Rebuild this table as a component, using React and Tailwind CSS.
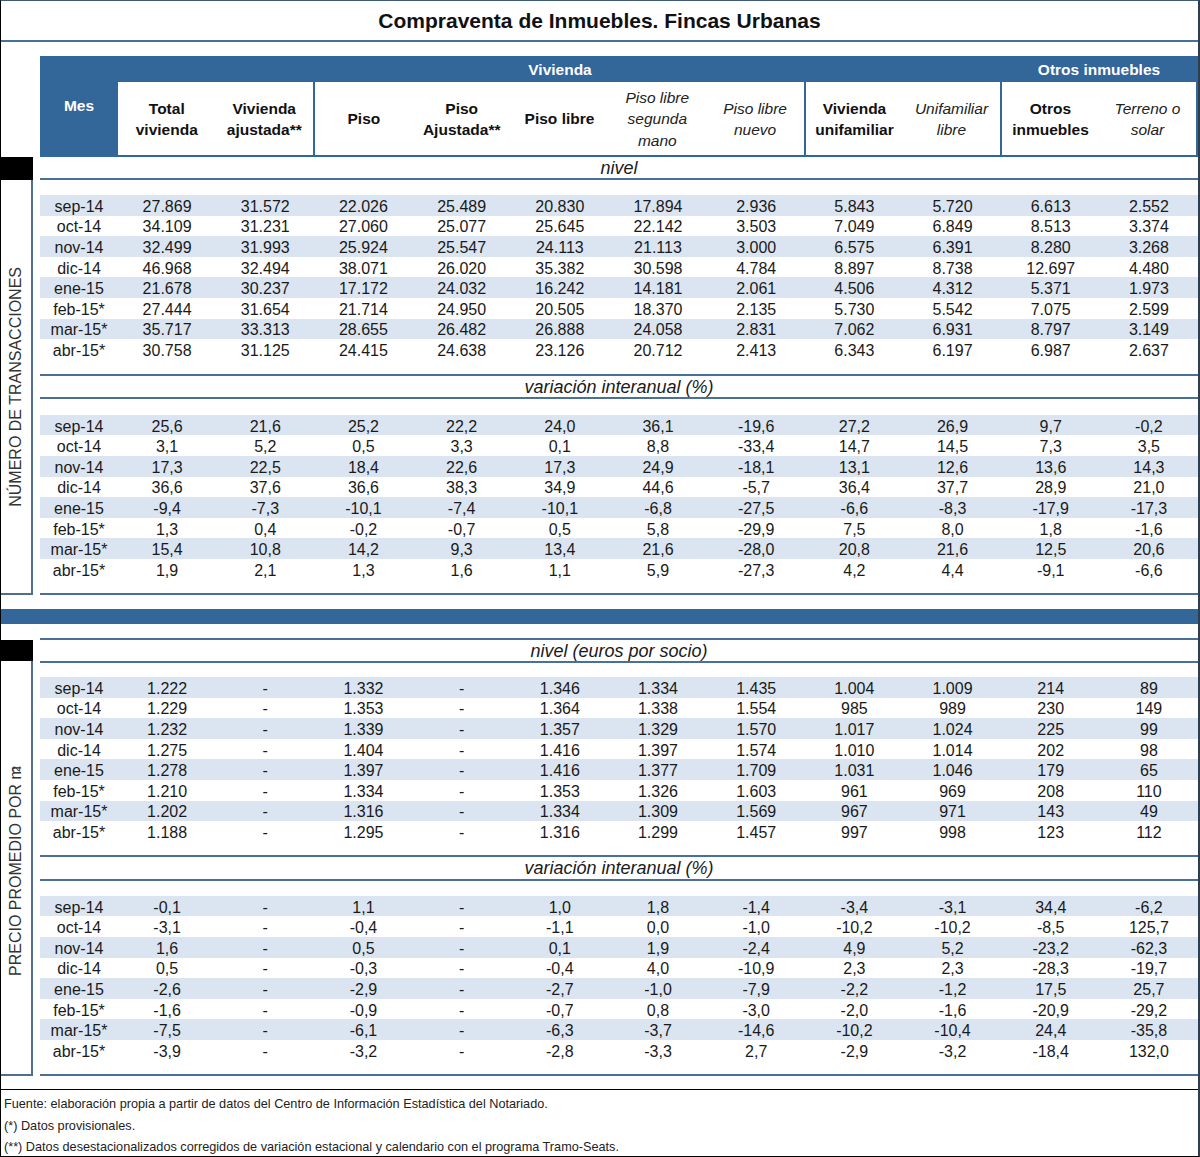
const MONTHS = ["sep-14", "oct-14", "nov-14", "dic-14", "ene-15", "feb-15*", "mar-15*", "abr-15*"];

const toRows = (txt) =>
  txt
    .trim()
    .split("\n")
    .map((l) => l.trim().split(/\s+/));

const nivel1 = toRows(`
27.869 31.572 22.026 25.489 20.830 17.894 2.936 5.843 5.720 6.613 2.552
34.109 31.231 27.060 25.077 25.645 22.142 3.503 7.049 6.849 8.513 3.374
32.499 31.993 25.924 25.547 24.113 21.113 3.000 6.575 6.391 8.280 3.268
46.968 32.494 38.071 26.020 35.382 30.598 4.784 8.897 8.738 12.697 4.480
21.678 30.237 17.172 24.032 16.242 14.181 2.061 4.506 4.312 5.371 1.973
27.444 31.654 21.714 24.950 20.505 18.370 2.135 5.730 5.542 7.075 2.599
35.717 33.313 28.655 26.482 26.888 24.058 2.831 7.062 6.931 8.797 3.149
30.758 31.125 24.415 24.638 23.126 20.712 2.413 6.343 6.197 6.987 2.637
`);

const var1 = toRows(`
25,6 21,6 25,2 22,2 24,0 36,1 -19,6 27,2 26,9 9,7 -0,2
3,1 5,2 0,5 3,3 0,1 8,8 -33,4 14,7 14,5 7,3 3,5
17,3 22,5 18,4 22,6 17,3 24,9 -18,1 13,1 12,6 13,6 14,3
36,6 37,6 36,6 38,3 34,9 44,6 -5,7 36,4 37,7 28,9 21,0
-9,4 -7,3 -10,1 -7,4 -10,1 -6,8 -27,5 -6,6 -8,3 -17,9 -17,3
1,3 0,4 -0,2 -0,7 0,5 5,8 -29,9 7,5 8,0 1,8 -1,6
15,4 10,8 14,2 9,3 13,4 21,6 -28,0 20,8 21,6 12,5 20,6
1,9 2,1 1,3 1,6 1,1 5,9 -27,3 4,2 4,4 -9,1 -6,6
`);

const nivel2 = toRows(`
1.222 - 1.332 - 1.346 1.334 1.435 1.004 1.009 214 89
1.229 - 1.353 - 1.364 1.338 1.554 985 989 230 149
1.232 - 1.339 - 1.357 1.329 1.570 1.017 1.024 225 99
1.275 - 1.404 - 1.416 1.397 1.574 1.010 1.014 202 98
1.278 - 1.397 - 1.416 1.377 1.709 1.031 1.046 179 65
1.210 - 1.334 - 1.353 1.326 1.603 961 969 208 110
1.202 - 1.316 - 1.334 1.309 1.569 967 971 143 49
1.188 - 1.295 - 1.316 1.299 1.457 997 998 123 112
`);

const var2 = toRows(`
-0,1 - 1,1 - 1,0 1,8 -1,4 -3,4 -3,1 34,4 -6,2
-3,1 - -0,4 - -1,1 0,0 -1,0 -10,2 -10,2 -8,5 125,7
1,6 - 0,5 - 0,1 1,9 -2,4 4,9 5,2 -23,2 -62,3
0,5 - -0,3 - -0,4 4,0 -10,9 2,3 2,3 -28,3 -19,7
-2,6 - -2,9 - -2,7 -1,0 -7,9 -2,2 -1,2 17,5 25,7
-1,6 - -0,9 - -0,7 0,8 -3,0 -2,0 -1,6 -20,9 -29,2
-7,5 - -6,1 - -6,3 -3,7 -14,6 -10,2 -10,4 24,4 -35,8
-3,9 - -3,2 - -2,8 -3,3 2,7 -2,9 -3,2 -18,4 132,0
`);

const Line = () => <div className="h-[2px] bg-[#4a7098] shrink-0" />;

const Caption = ({ children, h = "h-[21px]" }) => (
  <div className={`${h} shrink-0 flex items-center justify-center pt-[2px] italic text-[18px] text-[#1a1a1a]`}>
    {children}
  </div>
);

function Rows({ rows }) {
  return (
    <div className="flex flex-col shrink-0">
      {rows.map((r, i) => (
        <div
          key={i}
          className={`grid grid-cols-[78px_repeat(11,1fr)] h-[20.6px] pt-[3px] items-center text-[16px] leading-none text-[#1a1a1a] ${
            i % 2 === 0 ? "bg-[#dbe5f1]" : "bg-white"
          }`}
        >
          <div className="text-center">{MONTHS[i]}</div>
          {r.map((v, j) => (
            <div key={j} className="text-center">
              {v}
            </div>
          ))}
        </div>
      ))}
    </div>
  );
}

const HeadCell = ({ children, italic }) => (
  <div
    className={`flex-1 flex items-center justify-center pt-[1px] text-center leading-[21.5px] text-[15.5px] ${
      italic ? "italic text-[#222]" : "font-bold text-[#111]"
    }`}
  >
    <span>{children}</span>
  </div>
);

function Header() {
  return (
    <div className="flex h-[101px] w-[1158px] bg-[#336699] pr-[2px] pb-[2px] shrink-0">
      <div className="w-[78px] flex items-center justify-center pt-[1px] text-white font-bold text-[15.5px]">Mes</div>
      <div className="flex-1 flex flex-col">
        <div className="h-[26px] flex pt-[2px] text-white font-bold text-[15.5px]">
          <div className="w-[884px] flex items-center justify-center">Vivienda</div>
          <div className="flex-1 flex items-center justify-center">Otros inmuebles</div>
        </div>
        <div className="flex-1 flex gap-[2px]">
          <div className="w-[195px] bg-white flex">
            <HeadCell>
              Total
              <br />
              vivienda
            </HeadCell>
            <HeadCell>
              Vivienda
              <br />
              ajustada**
            </HeadCell>
          </div>
          <div className="w-[489px] bg-white flex">
            <HeadCell>Piso</HeadCell>
            <HeadCell>
              Piso
              <br />
              Ajustada**
            </HeadCell>
            <HeadCell>Piso libre</HeadCell>
            <HeadCell italic>
              Piso libre
              <br />
              segunda
              <br />
              mano
            </HeadCell>
            <HeadCell italic>
              Piso libre
              <br />
              nuevo
            </HeadCell>
          </div>
          <div className="w-[194px] bg-white flex">
            <HeadCell>
              Vivienda
              <br />
              unifamiliar
            </HeadCell>
            <HeadCell italic>
              Unifamiliar
              <br />
              libre
            </HeadCell>
          </div>
          <div className="flex-1 bg-white flex">
            <HeadCell>
              Otros
              <br />
              inmuebles
            </HeadCell>
            <HeadCell italic>
              Terreno o
              <br />
              solar
            </HeadCell>
          </div>
        </div>
      </div>
    </div>
  );
}

function SideLabel({ children }) {
  return (
    <div className="h-[415px] w-[32px] border-r-2 border-b-2 border-[#4f6f8f] flex items-center justify-center">
      <span className="[writing-mode:vertical-rl] rotate-180 whitespace-nowrap text-[16px] text-[#333]">
        {children}
      </span>
    </div>
  );
}

export default function App() {
  return (
    <div
      className="w-[1200px] h-[1157px] overflow-hidden bg-white border-l border-b border-black border-t border-t-[#3d5a78] border-r-2 border-r-[#2f3e4e] flex flex-col"
      style={{ fontFamily: '"Liberation Sans", Arial, sans-serif' }}
    >
      {/* titulo */}
      <div className="h-[39px] shrink-0 flex items-center justify-center font-bold text-[21px] text-[#111]">
        Compraventa de Inmuebles. Fincas Urbanas
      </div>
      <Line />
      <div className="h-[14px] shrink-0" />

      {/* cabecera */}
      <div className="flex shrink-0">
        <div className="w-[39px]" />
        <Header />
      </div>

      {/* numero de transacciones */}
      <div className="flex shrink-0 h-[438px]">
        <div className="w-[32px] flex flex-col">
          <div className="h-[23px] bg-black" />
          <SideLabel>NÚMERO DE TRANSACCIONES</SideLabel>
        </div>
        <div className="ml-[7px] w-[1158px] flex flex-col">
          <Caption>nivel</Caption>
          <Line />
          <div className="h-[15px]" />
          <Rows rows={nivel1} />
          <div className="h-[14px]" />
          <Line />
          <Caption>variación interanual (%)</Caption>
          <Line />
          <div className="h-[16px]" />
          <Rows rows={var1} />
          <div className="h-[13px]" />
          <Line />
        </div>
      </div>

      <div className="h-[14px] shrink-0" />
      <div className="h-[15px] shrink-0 bg-[#336699]" />
      <div className="h-[14px] shrink-0" />

      {/* precio promedio */}
      <div className="flex shrink-0 h-[438px]">
        <div className="w-[32px] flex flex-col">
          <div className="h-[2px]" />
          <div className="h-[21px] bg-black" />
          <SideLabel>
            PRECIO PROMEDIO POR m<sup className="text-[11px]">2</sup>
          </SideLabel>
        </div>
        <div className="ml-[7px] w-[1158px] flex flex-col">
          <Line />
          <Caption>nivel (euros por socio)</Caption>
          <Line />
          <div className="h-[14px]" />
          <Rows rows={nivel2} />
          <div className="h-[13px]" />
          <Line />
          <Caption h="h-[22px]">variación interanual (%)</Caption>
          <Line />
          <div className="h-[15px]" />
          <Rows rows={var2} />
          <div className="h-[13px]" />
          <Line />
        </div>
      </div>

      <div className="h-[13px] shrink-0" />
      <div className="h-px bg-black shrink-0" />

      {/* notas */}
      <div className="flex-1 overflow-hidden pt-[4px] pl-[3px] text-[12.7px] leading-[21.5px] text-[#222]">
        <div>Fuente: elaboración propia a partir de datos del Centro de Información Estadística del Notariado.</div>
        <div>(*) Datos provisionales.</div>
        <div>(**) Datos desestacionalizados corregidos de variación estacional y calendario con el programa Tramo-Seats.</div>
      </div>
    </div>
  );
}
